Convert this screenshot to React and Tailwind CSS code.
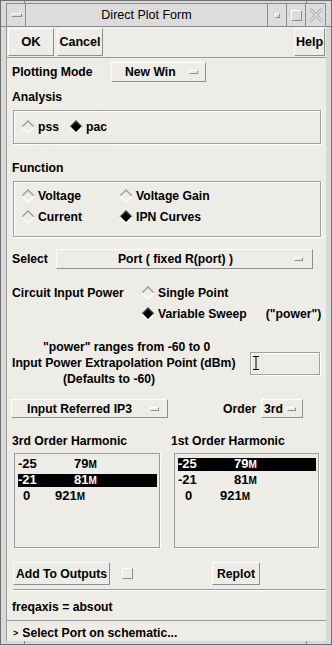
import React from 'react';

const bevel = 'border border-t-white border-l-white border-r-[#8e8e8e] border-b-[#8e8e8e]';

function Diamond({ on }) {
  return (
    <svg width="14" height="14" viewBox="0 0 14 14" className="shrink-0">
      <polygon points="7,1 13,7 7,13 1,7" fill={on ? '#000' : 'none'} />
      <polyline points="1,7 7,1 13,7" fill="none" stroke={on ? '#444' : '#9c9c9c'} strokeWidth="1.4" />
      <polyline points="1,7 7,13 13,7" fill="none" stroke="#fff" strokeWidth="1.4" />
    </svg>
  );
}

function Indicator() {
  return <span className={`block w-[9px] h-[4px] ${bevel}`} />;
}

function Radio({ on, label, className = '' }) {
  return (
    <div className={`flex items-center gap-[3px] whitespace-nowrap ${className}`}>
      <Diamond on={on} />
      <span>{label}</span>
    </div>
  );
}

function ListRow({ a, b, aPad, bAt, sel }) {
  return (
    <div className="h-[16px] flex items-center">
      <div className={`h-[13px] flex-1 flex items-center ${sel ? 'bg-black text-white' : ''}`}>
        <span className="shrink-0" style={{ width: bAt, paddingLeft: aPad }}>{a}</span>
        <span>{b}<span className="text-[10px]">M</span></span>
      </div>
    </div>
  );
}

export default function App() {
  return (
    <div className="w-[332px] h-[645px] bg-[#d8d8d8] border border-[#6f6f6f] relative overflow-hidden font-['Liberation_Sans',Arial,sans-serif] text-[12.2px] font-bold text-black leading-[14px]">
      {/* frame corner handles */}
      <span className="absolute left-[23px] top-0 w-px h-[2px] bg-[#8a8a8a]" />
      <span className="absolute left-[305px] top-0 w-px h-[2px] bg-[#8a8a8a]" />
      <span className="absolute left-[23px] bottom-0 w-px h-[3px] bg-[#8a8a8a]" />
      <span className="absolute left-[305px] bottom-0 w-px h-[3px] bg-[#8a8a8a]" />
      <span className="absolute left-0 top-[25px] w-[5px] h-px bg-[#8a8a8a]" />
      <span className="absolute right-0 top-[25px] w-[5px] h-px bg-[#8a8a8a]" />

      <div className="flex flex-col h-full pl-[5px] pr-[5px] pt-[2px] pb-[3px]">
        {/* title bar */}
        <div className="h-[24px] shrink-0 flex border border-[#8a8a8a] bg-[#dcdcdc] font-normal">
          <div className="w-[19px] flex items-center justify-center border-r border-[#8a8a8a]">
            <span className={`block w-[11px] h-[4px] ${bevel}`} />
          </div>
          <div className="flex-1 flex items-center justify-center text-[12.5px] border-r border-[#8a8a8a]">
            Direct Plot Form
          </div>
          <div className="w-[19px] flex items-center justify-center border-r border-[#8a8a8a]">
            <span className={`block w-[5px] h-[5px] ${bevel}`} />
          </div>
          <div className="w-[19px] flex items-center justify-center border-r border-[#8a8a8a]">
            <span className={`block w-[11px] h-[11px] ${bevel}`} />
          </div>
          <div className="w-[19px] flex items-center justify-center">
            <svg width="14" height="14" viewBox="0 0 14 14">
              <path d="M1 1 L13 13 M13 1 L1 13" stroke="#a0a0a0" strokeWidth="3" />
              <path d="M1 1 L13 13 M13 1 L1 13" stroke="#e8e8e8" strokeWidth="1.4" />
            </svg>
          </div>
        </div>

        {/* content */}
        <div className="flex-1 flex flex-col bg-[#edece6] border-l border-[#9a9a9a]">
          {/* top buttons */}
          <div className="h-[30px] shrink-0 flex items-start pt-[1px] pl-[1px] pr-[1px] gap-[3px]">
            <button className={`w-[46px] h-[28px] ${bevel} text-[13px]`}>OK</button>
            <button className={`w-[46px] h-[28px] ${bevel} text-[12.5px]`}>Cancel</button>
            <div className="flex-1" />
            <button className={`w-[31px] h-[28px] ${bevel} text-[12.5px]`}>Help</button>
          </div>

          {/* main panel */}
          <div className="h-[564px] shrink-0 border-t border-b border-[#9a9a9a] flex flex-col pl-[5px] pr-[6px]">
            <div className="mt-[4px] flex items-center h-[20px]">
              <span className="w-[99px]">Plotting Mode</span>
              <div className={`w-[95px] h-[20px] ${bevel} flex items-center pl-[13px] pr-[7px]`}>
                <span className="flex-1">New Win</span>
                <Indicator />
              </div>
            </div>

            <div className="mt-[8px]">Analysis</div>
            <div className="mt-[6px] ml-[1px] w-[308px] h-[34px] border border-[#a0a0a0] shadow-[inset_1px_1px_0_#fff,1px_1px_0_#fff] flex items-center pl-[7px]">
              <Radio on={false} label="pss" />
              <Radio on label="pac" className="ml-[10px]" />
            </div>

            <div className="mt-[17px]">Function</div>
            <div className="mt-[6px] ml-[1px] w-[308px] h-[56px] border border-[#a0a0a0] shadow-[inset_1px_1px_0_#fff,1px_1px_0_#fff] pt-[3px] pl-[7px] flex flex-col">
              <div className="flex h-[21px]">
                <Radio on={false} label="Voltage" className="w-[98px]" />
                <Radio on={false} label="Voltage Gain" />
              </div>
              <div className="flex h-[21px]">
                <Radio on={false} label="Current" className="w-[98px]" />
                <Radio on label="IPN Curves" />
              </div>
            </div>

            <div className="mt-[12px] flex items-center h-[20px]">
              <span className="w-[44px]">Select</span>
              <div className={`w-[257px] h-[20px] ${bevel} flex items-center pr-[9px]`}>
                <span className="flex-1 text-center">Port ( fixed R(port) )</span>
                <Indicator />
              </div>
            </div>

            <div className="mt-[13px] -mr-[6px] flex">
              <span className="w-[129px] shrink-0 h-[21px] flex items-center">Circuit Input Power</span>
              <div className="flex flex-col">
                <Radio on={false} label="Single Point" className="h-[21px]" />
                <div className="flex items-center h-[21px] whitespace-nowrap">
                  <Radio on label="Variable Sweep" />
                  <span className="ml-[19px]">("power")</span>
                </div>
              </div>
            </div>

            <div className="mt-[15px] flex items-center">
              <div className="w-[238px] flex flex-col leading-[16px] whitespace-nowrap">
                <span className="pl-[31px]">"power" ranges from -60 to 0</span>
                <span>Input Power Extrapolation Point (dBm)</span>
                <span className="pl-[51px]">(Defaults to -60)</span>
              </div>
              <div className="w-[70px] h-[23px] border border-[#a0a0a0] shadow-[inset_1px_1px_0_#fff,1px_1px_0_#fff] flex items-center pl-[2px]">
                <svg width="6" height="14" viewBox="0 0 6 14">
                  <path d="M0 0.5 H6 M3 0.5 V13.5 M0 13.5 H6" stroke="#000" strokeWidth="1" />
                </svg>
              </div>
            </div>

            <div className="mt-[12px] -ml-[1px] flex items-center h-[19px]">
              <div className={`w-[157px] h-[19px] ${bevel} flex items-center pl-[15px] pr-[8px]`}>
                <span className="flex-1">Input Referred IP3</span>
                <Indicator />
              </div>
              <span className="ml-[55px] w-[38px]">Order</span>
              <div className={`w-[42px] h-[19px] ${bevel} flex items-center pl-[2px] pr-[6px]`}>
                <span className="flex-1">3rd</span>
                <Indicator />
              </div>
            </div>

            <div className="mt-[16px] flex">
              <span className="w-[159px]">3rd Order Harmonic</span>
              <span>1st Order Harmonic</span>
            </div>

            <div className="mt-[5px] flex text-[13px]">
              <div className="ml-[2px] w-[146px] h-[95px] border border-[#9c9c9c] shadow-[1px_1px_0_#fff] pt-[2px] pl-[3px] pr-[2px]">
                <ListRow a="-25" b="79" aPad={0} bAt={56} />
                <ListRow a="-21" b="81" aPad={0} bAt={56} sel />
                <ListRow a="0" b="921" aPad={5} bAt={37} />
              </div>
              <div className="ml-[14px] w-[145px] h-[95px] border border-[#9c9c9c] shadow-[1px_1px_0_#fff] pt-[2px] pl-[3px] pr-[2px]">
                <ListRow a="-25" b="79" aPad={0} bAt={56} sel />
                <ListRow a="-21" b="81" aPad={0} bAt={56} />
                <ListRow a="0" b="921" aPad={7} bAt={42} />
              </div>
            </div>

            <div className="mt-[14px] flex items-center h-[23px]">
              <button className={`ml-[1px] w-[97px] h-[23px] ${bevel}`}>Add To Outputs</button>
              <span className={`ml-[12px] w-[11px] h-[11px] ${bevel}`} />
              <div className="flex-1" />
              <button className={`mr-[60px] w-[48px] h-[23px] ${bevel}`}>Replot</button>
            </div>

            <div className="mt-[4px] ml-[1px] -mr-[6px] h-[2px] border-t border-[#9a9a9a] border-b border-b-white" />

            <div className="mt-[9px]">freqaxis = absout</div>
          </div>

          {/* status line */}
          <div className="flex-1 flex items-center pl-[6px] pt-[3px]">
            <span className="text-[9px] mr-[4px]">&gt;</span>
            <span>Select Port on schematic...</span>
          </div>
        </div>
      </div>
    </div>
  );
}
